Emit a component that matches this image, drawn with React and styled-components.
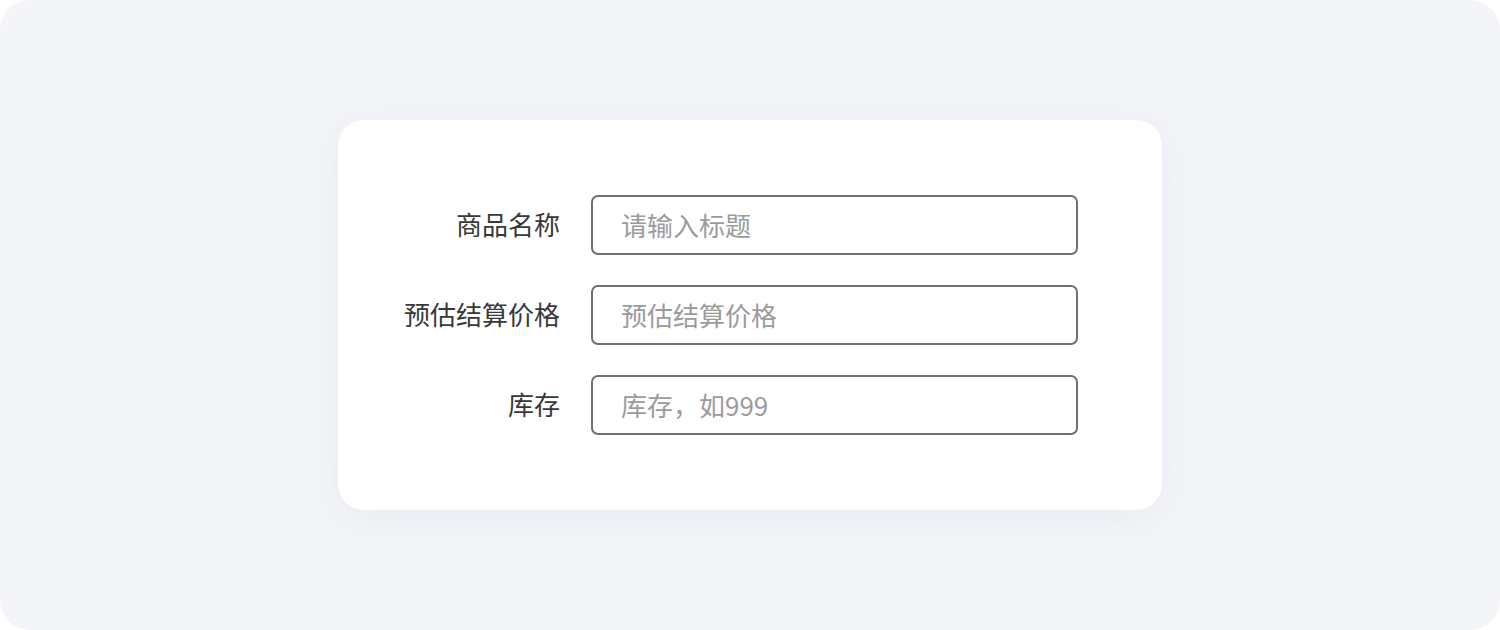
import React from 'react'
import styled, { createGlobalStyle } from 'styled-components'

const GlobalStyle = createGlobalStyle`
  html, body {
    margin: 0;
    padding: 0;
    background: #ffffff;
  }
  body {
    font-family: "Noto Sans CJK SC", "Noto Sans", sans-serif;
  }
`

const fields = [
  { label: '商品名称', placeholder: '请输入标题' },
  { label: '预估结算价格', placeholder: '预估结算价格' },
  { label: '库存', placeholder: '库存，如999' },
]

function App() {
  return (
    <>
      <GlobalStyle />
      <Page>
        <Card>
          {fields.map((f) => (
            <Row key={f.label}>
              <Label>{f.label}</Label>
              <Input placeholder={f.placeholder} />
            </Row>
          ))}
        </Card>
      </Page>
    </>
  )
}

const Page = styled.div`
  width: 1500px;
  height: 630px;
  box-sizing: border-box;
  background: #f4f5f9;
  border-radius: 30px;
  display: flex;
  align-items: center;
  justify-content: center;
  overflow: hidden;
`

const Card = styled.div`
  width: 824px;
  height: 390px;
  box-sizing: border-box;
  background: #ffffff;
  border-radius: 26px;
  box-shadow: 0px 8px 40px rgba(60, 70, 110, 0.06);
  padding: 75px 84px 75px 60px;
  display: flex;
  flex-direction: column;
  gap: 30px;
`

const Row = styled.div`
  display: flex;
  align-items: center;
  gap: 31px;
`

const Label = styled.label`
  width: 162px;
  text-align: right;
  font-size: 26px;
  color: #383838;
  line-height: 1;
  white-space: nowrap;
  margin-top: -2px;
`

const Input = styled.input`
  width: 487px;
  height: 60px;
  box-sizing: border-box;
  border: 2px solid #707070;
  border-radius: 7px;
  padding: 0 28px 2px;
  font-family: "Noto Sans CJK SC", "Noto Sans", sans-serif;
  font-size: 26px;
  color: #333333;
  background: #ffffff;
  outline: none;
  &::placeholder {
    color: #9b9b9b;
  }
`

export default App
